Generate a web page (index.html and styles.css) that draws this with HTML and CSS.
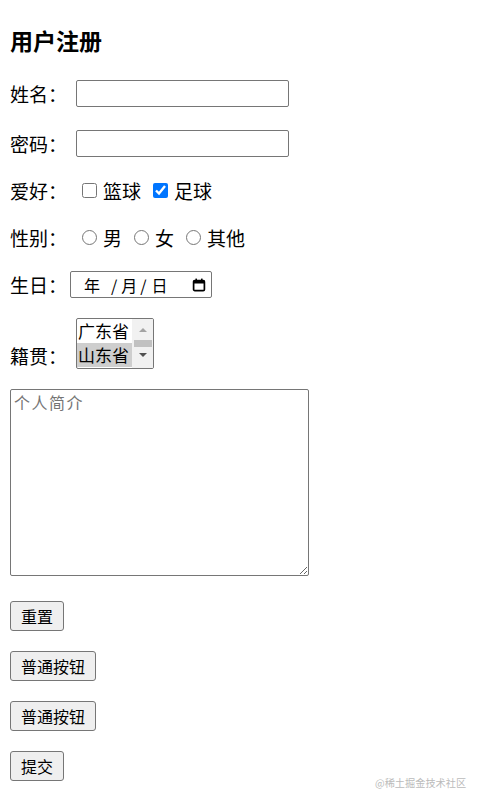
FILE: index.html
```html
<!DOCTYPE html>
<html lang="zh-CN">
<head>
    <meta charset="UTF-8">
    <meta name="viewport" content="width=device-width, initial-scale=1.0">
    <title>用户注册</title>
    <link rel="stylesheet" href="styles.css">
</head>
<body>

<h3 class="title">用户注册</h3>

<form class="reg-form">
    <div class="row">
        <label class="label" for="username">姓名：</label>
        <input type="text" id="username" class="text-input">
    </div>
    <div class="row row-pass">
        <label class="label" for="password">密码：</label>
        <input type="password" id="password" class="text-input">
    </div>
    <div class="row">
        <span class="label">爱好：</span>
        <div class="choices">
            <label class="choice"><input type="checkbox" name="hobby" value="basketball">篮球</label>
            <label class="choice"><input type="checkbox" name="hobby" value="football" checked>足球</label>
        </div>
    </div>
    <div class="row">
        <span class="label">性别：</span>
        <div class="choices">
            <label class="choice"><input type="radio" name="sex" value="male">男</label>
            <label class="choice"><input type="radio" name="sex" value="female">女</label>
            <label class="choice"><input type="radio" name="sex" value="other">其他</label>
        </div>
    </div>
    <div class="row">
        <span class="label label-date">生日：</span>
        <div class="date-box">
            <span class="date-part date-year">年</span>
            <span class="date-sep">/</span>
            <span class="date-part">月</span>
            <span class="date-sep date-sep2">/</span>
            <span class="date-part">日</span>
            <svg class="date-icon" width="14" height="14" viewBox="0 0 14 14">
                <rect x="1.6" y="2.6" width="10.8" height="10" rx="1.2" fill="none" stroke="#000" stroke-width="1.7"/>
                <rect x="1.5" y="2.5" width="11" height="3" fill="#000"/>
                <rect x="3.4" y="0.6" width="1.6" height="2.5" fill="#000"/>
                <rect x="9" y="0.6" width="1.6" height="2.5" fill="#000"/>
            </svg>
        </div>
    </div>
    <div class="row row-select">
        <span class="label">籍贯：</span>
        <div class="select-box">
            <div class="options">
                <div class="option">广东省</div>
                <div class="option selected">山东省</div>
            </div>
            <div class="scrollbar">
                <span class="arrow-up"></span>
                <span class="thumb"></span>
                <span class="arrow-down"></span>
            </div>
        </div>
    </div>

    <textarea class="intro" placeholder="个人简介"></textarea>

    <button type="reset" class="btn btn-first">重置</button>
    <button type="button" class="btn">普通按钮</button>
    <button type="button" class="btn">普通按钮</button>
    <button type="submit" class="btn">提交</button>
</form>

<div class="watermark">@稀土掘金技术社区</div>

</body>
</html>
```

FILE: styles.css
```css
/* Página básica */
body {
    margin: 0;
    padding: 0 10px;
    font-family: "Noto Sans CJK SC", "Microsoft YaHei", sans-serif;
    font-size: 19px;
    color: #000;
    background-color: #fff;
}
.title {
    margin: 27px 0 0;
    font-size: 23px;
    line-height: 27px;
    font-weight: bold;
}
.reg-form {
    display: flex;
    flex-direction: column;
    align-items: flex-start;
    margin-top: 26px;
}

/* Filas del formulario */
.row {
    display: flex;
    align-items: center;
    height: 27px;
}
.row + .row {
    margin-top: 20px;
}
.row.row-pass {
    margin-top: 23px;
}
.label {
    flex: none;
    width: 66px;
    line-height: 27px;
}
.label-date {
    width: 60px;
}
.text-input {
    width: 213px;
    height: 27px;
    box-sizing: border-box;
    margin: 0;
    padding: 1px 3px;
    border: 1px solid #767676;
    border-radius: 2px;
    font-family: inherit;
    font-size: 16px;
}

/* Casillas y radios */
.choices {
    display: flex;
    align-items: center;
    padding-left: 6px;
}
.choice {
    display: flex;
    align-items: center;
    gap: 6px;
    margin-right: 12px;
    line-height: 27px;
}
.choice input {
    width: 15px;
    height: 15px;
    margin: 0;
}

/* Fecha */
.date-box {
    display: flex;
    align-items: center;
    width: 142px;
    height: 27px;
    box-sizing: border-box;
    padding-left: 13px;
    border: 1px solid #767676;
    border-radius: 2px;
    font-size: 16px;
    line-height: 20px;
}
.date-year {
    margin-right: 11px;
}
.date-sep {
    margin-right: 4px;
}
.date-sep2 {
    margin-left: 3px;
    margin-right: 5px;
}
.date-icon {
    margin-left: auto;
    margin-right: 5px;
}

/* Lista de provincias */
.row.row-select {
    align-items: flex-end;
    height: auto;
}
.select-box {
    display: flex;
    width: 78px;
    height: 51px;
    box-sizing: border-box;
    border: 1px solid #767676;
    border-radius: 2px;
    overflow: hidden;
    font-size: 17px;
}
.options {
    width: 55px;
}
.option {
    height: 24px;
    line-height: 24px;
    padding-left: 1px;
    white-space: nowrap;
}
.option.selected {
    background-color: #cecece;
}
.scrollbar {
    display: flex;
    flex-direction: column;
    align-items: center;
    width: 21px;
    padding-top: 9px;
    background-color: #f1f1f1;
}
.arrow-up {
    width: 0;
    height: 0;
    border-left: 4px solid transparent;
    border-right: 4px solid transparent;
    border-bottom: 4px solid #a3a3a3;
}
.thumb {
    width: 18px;
    height: 7px;
    margin: 8px 0 6px;
    background-color: #c1c1c1;
}
.arrow-down {
    width: 0;
    height: 0;
    border-left: 4px solid transparent;
    border-right: 4px solid transparent;
    border-top: 4px solid #505050;
}

/* Texto libre */
.intro {
    width: 299px;
    height: 187px;
    box-sizing: border-box;
    margin: 20px 0 0;
    padding: 2px 3px;
    border: 1px solid #767676;
    border-radius: 2px;
    font-family: inherit;
    font-size: 16px;
    line-height: 20px;
    letter-spacing: 1.5px;
}
.intro::placeholder {
    color: #757575;
}

/* Botones */
.btn {
    height: 30px;
    margin: 20px 0 0;
    padding: 0 10px;
    border: 1px solid #767676;
    border-radius: 3px;
    background-color: #efefef;
    color: #000;
    font-family: inherit;
    font-size: 16px;
    line-height: 28px;
}
.btn.btn-first {
    margin-top: 25px;
}

.watermark {
    position: absolute;
    left: 375px;
    top: 776px;
    font-size: 10.2px;
    line-height: 14px;
    color: #bbb;
}
```
